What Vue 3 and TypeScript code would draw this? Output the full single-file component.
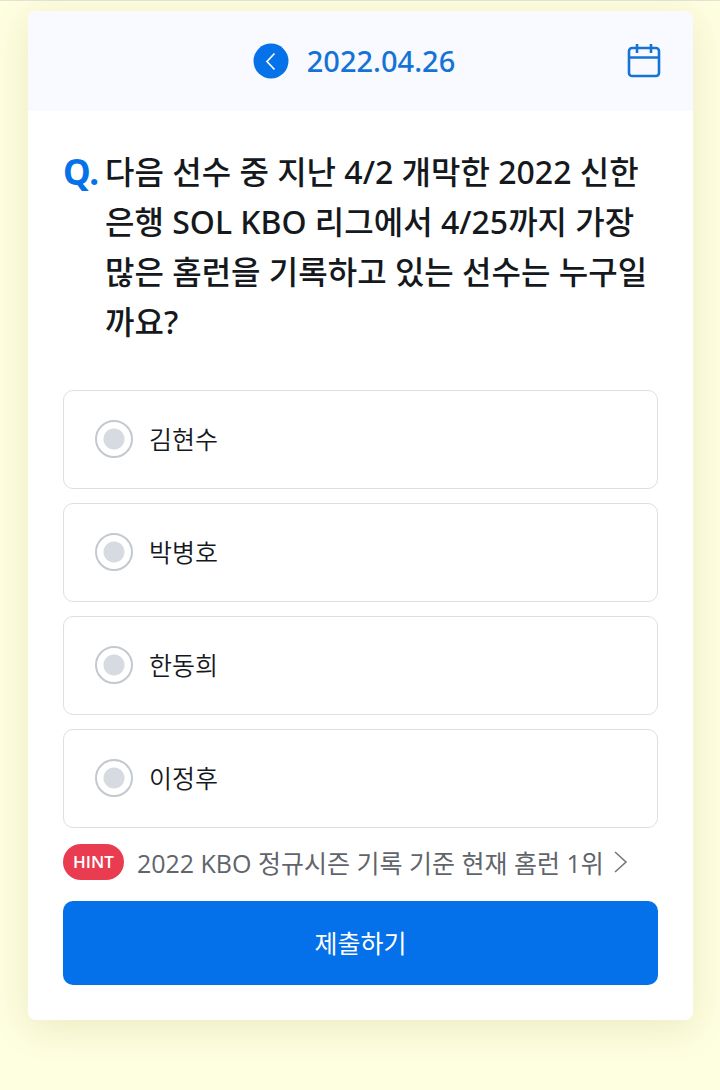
<script setup lang="ts">
import { ref } from 'vue'

const date = '2022.04.26'
const players: string[] = ['김현수', '박병호', '한동희', '이정후']
const selected = ref<string>('')
</script>

<template>
  <main class="page">
    <form class="card" @submit.prevent>
      <header class="head">
        <button type="button" class="prev" aria-label="이전">
          <svg viewBox="0 0 36 36" fill="none" aria-hidden="true">
            <circle cx="18" cy="18" r="17.5" fill="#0672e9" />
            <path d="M21.5 10.5 14 18.5l7.5 8" stroke="#fff" stroke-width="1.7" />
          </svg>
        </button>
        <time class="date" datetime="2022-04-26">{{ date }}</time>
        <button type="button" class="calendar" aria-label="달력">
          <svg viewBox="0 0 34 36" fill="none" stroke="#1673d6" stroke-width="2.6" aria-hidden="true">
            <rect x="2" y="5" width="30" height="28" rx="3" />
            <path d="M2 14.500h30M10 1v9M24 1v9" />
          </svg>
        </button>
      </header>

      <div class="body">
        <h1 id="question" class="question">
          <span class="mark">Q.</span>
          <span>다음 선수 중 지난 4/2 개막한 2022 신한은행 SOL KBO 리그에서 4/25까지 가장 많은 홈런을 기록하고 있는 선수는 누구일까요?</span>
        </h1>

        <div class="options" role="radiogroup" aria-labelledby="question">
          <label v-for="name in players" :key="name" class="option">
            <input v-model="selected" type="radio" name="player" :value="name" />
            <span>{{ name }}</span>
          </label>
        </div>

        <a href="#hint" class="hint">
          <span class="badge">HINT</span>
          <span class="hint-text">2022 KBO 정규시즌 기록 기준 현재 홈런 1위</span>
          <svg class="arrow" viewBox="0 0 14 24" fill="none" aria-hidden="true">
            <path d="M1 2l11 10L1 22" stroke="#74787d" stroke-width="1.6" />
          </svg>
        </a>

        <button type="submit" class="submit">제출하기</button>
      </div>
    </form>
  </main>
</template>

<style>
body {
  margin: 0;
  background: #fefee1;
}
</style>

<style scoped>
.page {
  box-sizing: border-box;
  min-height: 100vh;
  padding: 10px 27px 70px 28px;
  border-top: 1px solid #e4e4d4;
  background: #fefee1;
  color: #15191d;
  font-family: "Noto Sans", "Noto Sans CJK KR", sans-serif;
}
.card {
  border-radius: 8px;
  background: #fff;
  box-shadow: 0 8px 36px rgba(120, 130, 20, 0.15);
}
.head {
  display: grid;
  grid-template-columns: 1fr auto auto 1fr;
  align-items: center;
  height: 100px;
  padding: 0 32px 0 35px;
  border-radius: 8px 8px 0 0;
  background: #f8faff;
}
button {
  padding: 0;
  border: 0;
  background: none;
  font: inherit;
  cursor: pointer;
}
.prev {
  grid-column: 2;
  width: 36px;
  height: 36px;
  margin-right: 18px;
}
svg {
  display: block;
  width: 100%;
  height: 100%;
}
.date {
  margin-right: 16px;
  color: #1673d6;
  font-size: 29px;
  font-weight: 500;
  line-height: 40px;
}
.calendar {
  justify-self: end;
  width: 34px;
  height: 36px;
}
.body {
  padding: 36px 35px 35px;
}
.question {
  display: flex;
  margin: 0 0 43px;
  font-size: 32px;
  font-weight: 500;
  line-height: 50px;
}
.mark {
  flex: 0 0 42px;
  color: #0672e9;
  font-size: 35px;
  font-weight: 700;
}
.options {
  display: grid;
  gap: 14px;
}
.option {
  display: flex;
  box-sizing: border-box;
  align-items: center;
  gap: 16px;
  height: 99px;
  padding: 0 31px 2px;
  border: 1px solid #dce0e4;
  border-radius: 10px;
  font-size: 25px;
  font-weight: 350;
  line-height: 36px;
  cursor: pointer;
}
.option input {
  appearance: none;
  box-sizing: border-box;
  width: 38px;
  height: 38px;
  margin: 0;
  border: 2px solid #c3c9cf;
  border-radius: 50%;
  background: radial-gradient(circle, #d6dbe2 10px, #fff 11px);
}
.option input:checked {
  border-color: #0672e9;
  background: radial-gradient(circle, #0672e9 10px, #fff 11px);
}
.hint {
  display: flex;
  align-items: center;
  height: 36px;
  margin: 16px 0 21px;
  color: #60656b;
  font-family: "Open Sans", "Noto Sans CJK KR", sans-serif;
  font-size: 25px;
  font-weight: 400;
  text-decoration: none;
  white-space: nowrap;
}
.badge {
  margin-right: 13px;
  padding: 0 10px;
  border-radius: 18px;
  background: #ea3c50;
  color: #fff;
  font-size: 17px;
  font-weight: 600;
  line-height: 36px;
}
.arrow {
  width: 14px;
  height: 24px;
  margin-left: 10px;
}
.submit {
  display: block;
  width: 100%;
  height: 84px;
  padding-bottom: 2px;
  border-radius: 10px;
  background: #0470e9;
  color: #fff;
  font-size: 25px;
}
</style>
